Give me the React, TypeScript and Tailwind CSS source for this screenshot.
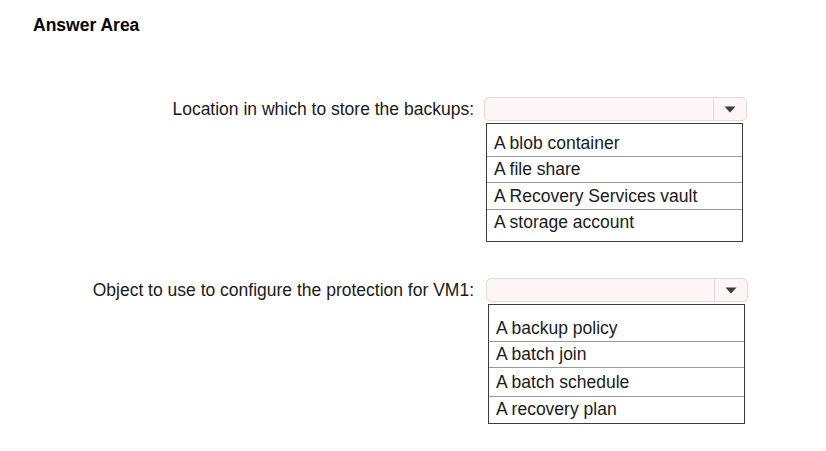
import React from "react";

type Question = {
    label: string;
    options: string[];
    selectClass: string;
    listClass: string;
    rowHeights: string[];
};

const QUESTIONS: Question[] = [
    {
        label: "Location in which to store the backups:",
        options: ["A blob container", "A file share", "A Recovery Services vault", "A storage account"],
        selectClass: "ml-[10px] w-[263px]",
        listClass: "ml-[12px] w-[257px] pt-[6px] pb-[6px]",
        rowHeights: ["h-[26px]", "h-[26px]", "h-[27px]", "h-[26px]"],
    },
    {
        label: "Object to use to configure the protection for VM1:",
        options: ["A backup policy", "A batch join", "A batch schedule", "A recovery plan"],
        selectClass: "ml-[12px] w-[262px]",
        listClass: "ml-[14px] w-[257px] pt-[10px] pb-[2px]",
        rowHeights: ["h-[26px]", "h-[26px]", "h-[29px]", "h-[25px]"],
    },
];

function Select({ className }: { className: string }) {
    return (
        <div className={`flex h-[24px] rounded-[5px] border border-[#dcdcdc] bg-[#fdf5f6] ${className}`}>
            <div className="flex-1" />
            <div className="flex w-[33px] items-center justify-center border-l border-[#dcdcdc]">
                <svg width="12" height="7" viewBox="0 0 12 7">
                    <path d="M0.5 0.5 L11.5 0.5 L6 6.5 Z" fill="#3a3a3a" />
                </svg>
            </div>
        </div>
    );
}

function OptionList({ q }: { q: Question }) {
    return (
        <div className={`mt-[2px] border border-[#3c3c3c] ${q.listClass}`}>
            {q.options.map((opt, i) => (
                <div
                    key={opt}
                    className={`flex items-center pl-[7px] ${q.rowHeights[i]} ${i > 0 ? "border-t border-[#9a9a9a]" : ""}`}
                >
                    {opt}
                </div>
            ))}
        </div>
    );
}

export default function App() {
    return (
        <div
            className="h-[451px] w-[826px] bg-white text-[#1a1a1a]"
            style={{ fontFamily: '"Liberation Sans", Arial, sans-serif' }}
        >
            <h1 className="pl-[33px] pt-[14px] text-[17.5px] font-bold leading-[22px] text-black">Answer Area</h1>

            <div className="mt-[61px] flex flex-col gap-[36px] text-[17.5px]">
                {QUESTIONS.map((q) => (
                    <div key={q.label} className="flex">
                        <div className="flex h-[24px] w-[474px] items-center justify-end">{q.label}</div>
                        <div className="flex flex-col">
                            <Select className={q.selectClass} />
                            <OptionList q={q} />
                        </div>
                    </div>
                ))}
            </div>
        </div>
    );
}
